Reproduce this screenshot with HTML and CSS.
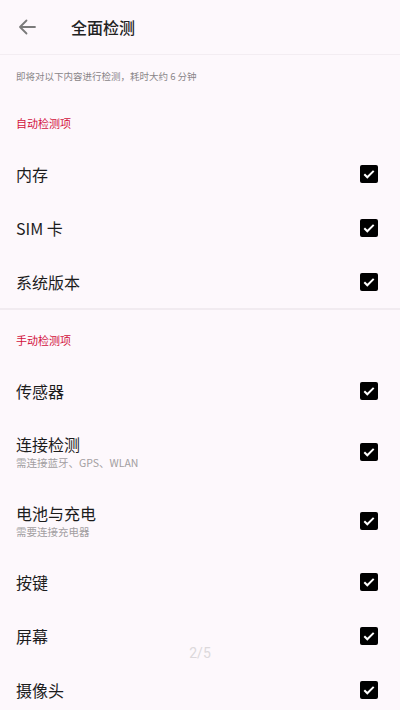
FILE: index.html
```html
<!DOCTYPE html>
<html lang="zh-CN">
<head>
<meta charset="utf-8">
<link rel="stylesheet" href="styles.css">
</head>
<body>
<div class="page">
  <header class="topbar">
    <svg class="back" width="18" height="16" viewBox="0 0 18 16"><path d="M17 8H2M8.5 1.5L2 8l6.5 6.5" fill="none" stroke="#7a7a7a" stroke-width="1.8" stroke-linecap="round" stroke-linejoin="round"/></svg>
    <h1 class="title">全面检测</h1>
  </header>
  <p class="desc">即将对以下内容进行检测，耗时大约 6 分钟</p>

  <section class="group">
    <div class="group-label">自动检测项</div>
    <div class="row"><div class="text"><div class="name">内存</div></div><span class="cb"></span></div>
    <div class="row"><div class="text"><div class="name">SIM 卡</div></div><span class="cb"></span></div>
    <div class="row"><div class="text"><div class="name">系统版本</div></div><span class="cb"></span></div>
  </section>
  <div class="divider"></div>
  <section class="group">
    <div class="group-label">手动检测项</div>
    <div class="row"><div class="text"><div class="name">传感器</div></div><span class="cb"></span></div>
    <div class="row tall"><div class="text"><div class="name">连接检测</div><div class="sub">需连接蓝牙、GPS、WLAN</div></div><span class="cb"></span></div>
    <div class="row tall"><div class="text"><div class="name">电池与充电</div><div class="sub">需要连接充电器</div></div><span class="cb"></span></div>
    <div class="row"><div class="text"><div class="name">按键</div></div><span class="cb"></span></div>
    <div class="row"><div class="text"><div class="name">屏幕</div></div><span class="cb"></span></div>
    <div class="row"><div class="text"><div class="name">摄像头</div></div><span class="cb"></span></div>
  </section>
  <div class="pager">2/5</div>
</div>
</body>
</html>
```
FILE: styles.css
```css
* { box-sizing: border-box; margin: 0; padding: 0; }
html, body { background: #fdf8fc; }
body {
  width: 400px;
  height: 710px;
  overflow: hidden;
  font-family: "Noto Sans CJK SC", "Noto Sans", Roboto, sans-serif;
  color: #1c1c1c;
}
.page { position: relative; width: 400px; height: 710px; }
.topbar {
  height: 55px;
  display: flex;
  align-items: center;
  padding-left: 18px;
  border-bottom: 1px solid #f3edf2;
}
.back { display: block; margin-top: -1px; }
.title {
  font-size: 16px;
  font-weight: 500;
  margin-left: 35px;
  color: #222;
  line-height: 22px;
}
.desc {
  font-size: 9.5px;
  line-height: 14px;
  color: #8a8689;
  padding: 14px 16px 10px;
}
.group-label {
  font-size: 11px;
  line-height: 16px;
  color: #d2123c;
  padding: 22px 16px 16px;
}
.row {
  height: 54px;
  display: flex;
  align-items: center;
  justify-content: space-between;
  padding: 0 22px 0 16px;
}
.row.tall { height: 68.5px; }
.name { font-size: 16px; line-height: 20px; color: #1c1c1c; }
.sub { font-size: 10.5px; line-height: 14px; color: #a29ea1; margin-top: 2px; }
.cb {
  width: 18px;
  height: 18px;
  border-radius: 2px;
  background: #000 url("data:image/svg+xml;utf8,<svg xmlns='http://www.w3.org/2000/svg' width='18' height='18' viewBox='0 0 18 18'><path d='M4.3 9.3l3 3 6.4-6.4' fill='none' stroke='white' stroke-width='2'/></svg>") center/18px 18px no-repeat;
  flex: none;
}
.divider { height: 2px; background: #f1ebf0; margin-top: -1px; }
.pager {
  position: absolute;
  left: 0;
  right: 0;
  top: 643px;
  text-align: center;
  font-size: 14px;
  line-height: 20px;
  color: #dcd8db;
  font-family: Roboto, sans-serif;
}
```
